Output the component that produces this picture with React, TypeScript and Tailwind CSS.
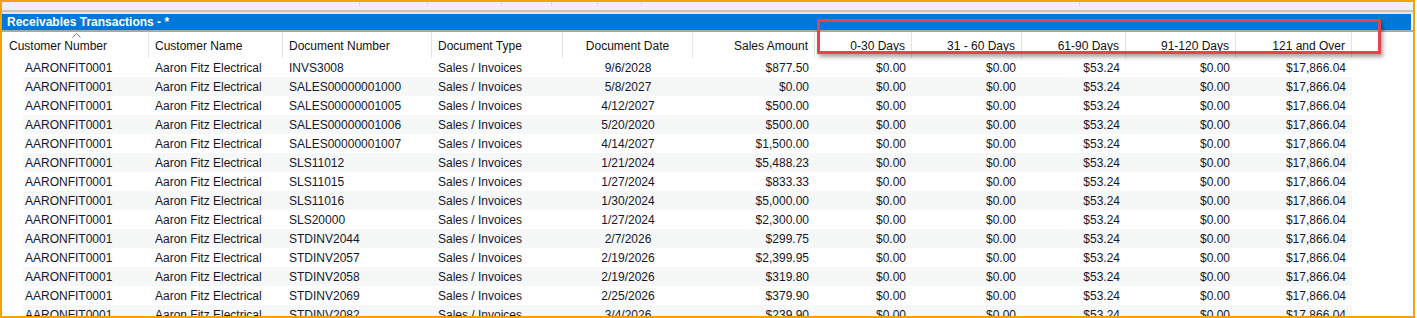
import React from "react";

type Col = { label: string; w: number; align: "left" | "center" | "right" };

const cols: Col[] = [
  { label: "Customer Number", w: 147, align: "left" },
  { label: "Customer Name", w: 134, align: "left" },
  { label: "Document Number", w: 149, align: "left" },
  { label: "Document Type", w: 131, align: "left" },
  { label: "Document Date", w: 130, align: "center" },
  { label: "Sales Amount", w: 122, align: "right" },
  { label: "0-30 Days", w: 97, align: "right" },
  { label: "31 - 60 Days", w: 110, align: "right" },
  { label: "61-90 Days", w: 104, align: "right" },
  { label: "91-120 Days", w: 110, align: "right" },
  { label: "121 and Over", w: 116, align: "right" },
];

const docs: [string, string, string][] = [
  ["INVS3008", "9/6/2028", "$877.50"],
  ["SALES00000001000", "5/8/2027", "$0.00"],
  ["SALES00000001005", "4/12/2027", "$500.00"],
  ["SALES00000001006", "5/20/2020", "$500.00"],
  ["SALES00000001007", "4/14/2027", "$1,500.00"],
  ["SLS11012", "1/21/2024", "$5,488.23"],
  ["SLS11015", "1/27/2024", "$833.33"],
  ["SLS11016", "1/30/2024", "$5,000.00"],
  ["SLS20000", "1/27/2024", "$2,300.00"],
  ["STDINV2044", "2/7/2026", "$299.75"],
  ["STDINV2057", "2/19/2026", "$2,399.95"],
  ["STDINV2058", "2/19/2026", "$319.80"],
  ["STDINV2069", "2/25/2026", "$379.90"],
  ["STDINV2082", "3/4/2026", "$239.90"],
];

const alignCls = (a: Col["align"]) =>
  a === "left"
    ? "justify-start pl-[6px]"
    : a === "center"
    ? "justify-center"
    : "justify-end pr-[6px]";

// faint ticks in the toolbar strip above the title
const ticks = [358, 68, 74, 50, 46, 44, 438];

export default function App() {
  return (
    <div
      className="relative w-[1415px] h-[318px] overflow-hidden border-2 border-[#f0a30a] bg-white text-[12px] leading-none"
      style={{ fontFamily: '"Liberation Sans", Arial, sans-serif' }}
    >
      {/* toolbar strip */}
      <div className="flex h-[8px] bg-[#f0f0f0]">
        {ticks.map((w, i) => (
          <div key={i} className="h-[3px] shrink-0 border-r border-[#d8d8d8]" style={{ width: w }} />
        ))}
      </div>
      <div className="h-[2px] bg-[#c4c4c4]" />
      <div className="h-[2px] bg-[#e6e6e6]" />

      {/* title bar */}
      <div className="mr-[2px] flex h-[16px] items-center bg-[#0078d7] pl-[5px] text-[12px] font-bold text-white">
        Receivables Transactions - *
      </div>
      <div className="h-[2px] bg-[#a7a7a7]" />

      {/* header */}
      <div className="flex h-[26px] text-[#111]">
        {cols.map((c, i) => (
          <div
            key={c.label}
            className={`relative flex shrink-0 items-center border-r border-[#e3e3e3] pt-[1px] ${alignCls(c.align)} ${
              i === 0 ? "pl-[7px]" : ""
            }`}
            style={{ width: c.w }}
          >
            {i === 0 && (
              <svg
                className="absolute left-[70px] top-[1px]"
                width="9"
                height="5"
                viewBox="0 0 9 5"
                fill="none"
                stroke="#777"
                strokeWidth="1"
              >
                <path d="M0.5 4.5 L4.5 0.5 L8.5 4.5" />
              </svg>
            )}
            {c.label}
          </div>
        ))}
      </div>

      {/* rows */}
      <div className="flex flex-col text-[#16162a]">
        {docs.map(([doc, date, amt], r) => {
          const vals = [
            "AARONFIT0001",
            "Aaron Fitz Electrical",
            doc,
            "Sales / Invoices",
            date,
            amt,
            "$0.00",
            "$0.00",
            "$53.24",
            "$0.00",
            "$17,866.04",
          ];
          return (
            <div key={r} className="flex h-[19px] shrink-0">
              <div className="w-[21px] shrink-0" />
              <div className={`flex ${r % 2 === 1 ? "bg-[#f6f8f8]" : ""}`}>
                {cols.map((c, i) => (
                  <div
                    key={i}
                    className={`flex shrink-0 items-center ${i === 0 ? "pl-[2px]" : alignCls(c.align)}`}
                    style={{ width: i === 0 ? c.w - 21 : c.w }}
                  >
                    {vals[i]}
                  </div>
                ))}
              </div>
            </div>
          );
        })}
      </div>

      {/* red annotation box */}
      <div className="absolute left-[815px] top-[17px] h-[35px] w-[564px] border-[3px] border-[#e8434a] shadow-[2px_3px_4px_rgba(0,0,0,0.35)]" />
    </div>
  );
}
